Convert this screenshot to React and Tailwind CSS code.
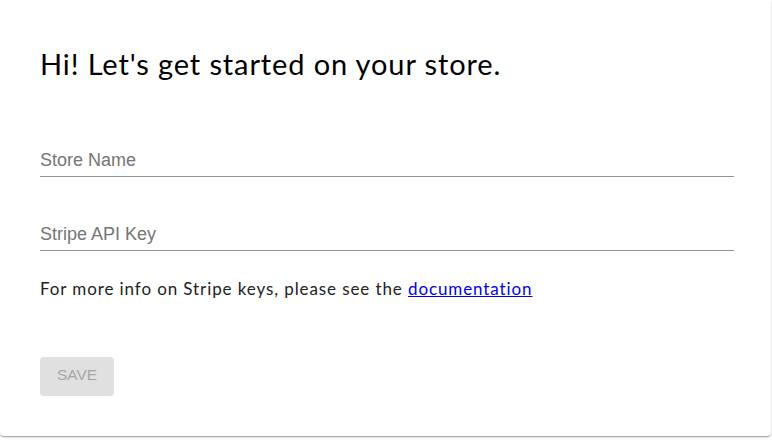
export default function App() {
  return (
    <div className="min-h-[444px] bg-white">
      <div className="flex h-[436px] w-[771px] flex-col rounded-b bg-white pt-[46px] pr-[37px] pb-10 pl-10 shadow-[0_1px_3px_rgba(0,0,0,0.2),0_1px_1px_rgba(0,0,0,0.14),0_2px_1px_-1px_rgba(0,0,0,0.12)]">
        <h1 className="font-['Lato',sans-serif] text-[29px] leading-[36px] font-normal tracking-[0.88px] text-black">
          Hi! Let's get started on your store.
        </h1>

        <div className="mt-[66px] border-b border-[#949494] pb-[4px]">
          <label className="block font-['Liberation_Sans',Arial,sans-serif] text-[18px] leading-6 text-[#757575]">
            Store Name
          </label>
        </div>

        <div className="mt-[45px] border-b border-[#949494] pb-[4px]">
          <label className="block font-['Liberation_Sans',Arial,sans-serif] text-[18px] leading-6 text-[#757575]">
            Stripe API Key
          </label>
        </div>

        <p className="mt-[26px] font-['Lato',sans-serif] text-[17px] leading-6 tracking-[0.9px] text-[#222]">
          For more info on Stripe keys, please see the{' '}
          <a href="#" className="text-[#0000ee] underline">
            documentation
          </a>
        </p>

        <div className="mt-[56px]">
          <button
            type="button"
            disabled
            className="h-[39px] rounded bg-[#e0e0e0] px-[17px] pb-[3px] font-['Liberation_Sans',Arial,sans-serif] text-[15.4px] uppercase text-[#a6a6a6]"
          >
            Save
          </button>
        </div>
      </div>
    </div>
  )
}
